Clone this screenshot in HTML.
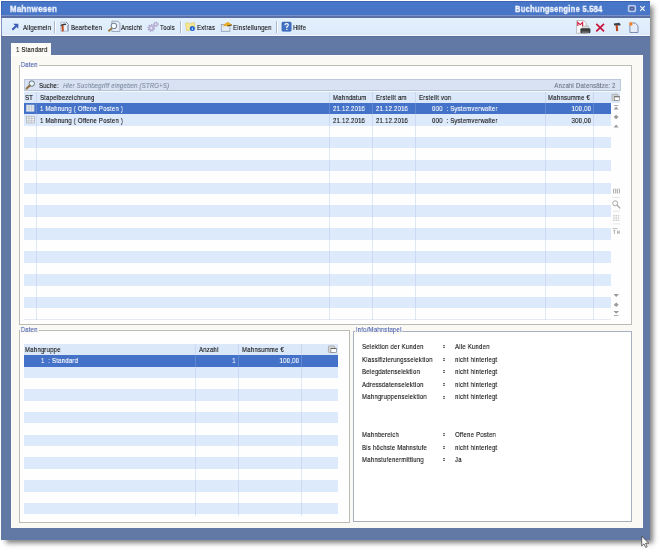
<!DOCTYPE html>
<html><head><meta charset="utf-8"><style>
*{margin:0;padding:0;box-sizing:border-box}
html,body{width:660px;height:556px;overflow:hidden;background:#fff}
body{position:relative;font-family:"Liberation Sans",sans-serif;font-size:7px;color:#111}
.a{position:absolute}
.t{position:absolute;white-space:nowrap;line-height:1;transform-origin:0 0;transform:scaleX(.75);letter-spacing:.28px;font-size:8px;-webkit-text-stroke:.14px currentColor;will-change:transform}
.tr{position:absolute;white-space:nowrap;line-height:1;transform-origin:100% 0;transform:scaleX(.75);letter-spacing:.28px;text-align:right;font-size:8px;-webkit-text-stroke:.14px currentColor;will-change:transform}
.ttl{color:#f4f7ff;font-weight:bold;font-size:9px;transform:scaleX(.9);-webkit-text-stroke:.3px currentColor}
.sep{position:absolute;top:21px;width:2px;height:12px;border-left:1px solid #a9b8cc;border-right:1px solid #fff}
.gbt{color:#4b63b0}
.sel{color:#fff}
</style></head><body>
<div class="a" style="left:1px;top:1px;width:649px;height:539px;background:#6279a6;box-shadow:4px 4px 5px -1px rgba(0,0,0,.5)"></div>
<div class="a" style="left:1px;top:1px;width:649px;height:14px;background:#4776c8;border-top:1px solid #3c64b4;border-left:1px solid #3c64b4"></div>
<div class="a" style="left:1px;top:15px;width:649px;height:1px;background:#7a92c6"></div>
<div class="a" style="left:1px;top:16px;width:649px;height:2px;background:#5a70a6"></div>
<div class="a" style="left:1px;top:18px;width:649px;height:17px;background:linear-gradient(#e3f2fd,#dde9fb);border-left:1px solid #8294bc"></div>
<div class="a" style="left:2px;top:35px;width:648px;height:1px;background:#f2f9ff"></div>
<div class="a" style="left:1px;top:36px;width:649px;height:1px;background:#5b6e9c"></div>
<div class="t ttl" style="left:10px;top:4.1px;transform:scale(.88,1.1)">Mahnwesen</div>
<div class="t ttl" style="left:515px;top:4.1px;transform:scale(.845,1.1)">Buchungsengine 5.584</div>
<div class="t" style="left:23px;top:24px;color:#000;-webkit-text-stroke:.1px #000">Allgemein</div>
<div class="t" style="left:71px;top:24px;color:#000;-webkit-text-stroke:.1px #000">Bearbeiten</div>
<div class="t" style="left:121px;top:24px;color:#000;-webkit-text-stroke:.1px #000">Ansicht</div>
<div class="t" style="left:160px;top:24px;color:#000;-webkit-text-stroke:.1px #000">Tools</div>
<div class="t" style="left:197px;top:24px;color:#000;-webkit-text-stroke:.1px #000">Extras</div>
<div class="t" style="left:233px;top:24px;color:#000;-webkit-text-stroke:.1px #000">Einstellungen</div>
<div class="t" style="left:293px;top:24px;color:#000;-webkit-text-stroke:.1px #000">Hilfe</div>
<div class="sep" style="left:54px"></div>
<div class="sep" style="left:180px"></div>
<div class="sep" style="left:276px"></div>
<div class="a" style="left:11px;top:43px;width:40px;height:13px;background:#fcfbf8"></div>
<div class="a" style="left:11px;top:55px;width:632px;height:473px;background:#faf9f4;border-left:1px solid #fff;border-top:1px solid #fff;border-right:1px solid #fdfdfb"></div>
<div class="t" style="left:16px;top:46px;">1 Standard</div>
<div class="a" style="left:19px;top:65px;width:613px;height:260px;border:1px solid #bcbbb6;background:#fefefe"></div>
<div class="t gbt" style="left:20px;top:61px;background:#fbfaf5;padding:0 1px">Daten</div>
<div class="a" style="left:24px;top:79px;width:597px;height:12px;background:#d9e2f2;border:1px solid #bcc8dc;border-bottom-color:#b8c3d6"></div>
<div class="a" style="left:24px;top:91px;width:596px;height:1px;background:#f4f8ff"></div>
<div class="t" style="left:39px;top:82px;">Suche:</div>
<div class="t" style="left:63px;top:82px;font-style:italic;color:#7c8aa0">Hier Suchbegriff eingeben (STRG+S)</div>
<div class="tr" style="right:44px;top:82px;color:#6c7480">Anzahl Datensätze: 2</div>
<div class="a" style="left:24px;top:92px;width:596px;height:10.6px;background:#dbe8fa"></div>
<div class="t" style="left:25px;top:93.6px;">ST</div>
<div class="t" style="left:40px;top:93.6px;">Stapelbezeichnung</div>
<div class="t" style="left:333px;top:93.6px;">Mahndatum</div>
<div class="t" style="left:376px;top:93.6px;">Erstellt am</div>
<div class="t" style="left:419px;top:93.6px;">Erstellt von</div>
<div class="t" style="left:548px;top:93.6px;">Mahnsumme €</div>
<div class="a" style="left:24px;top:102.6px;width:587px;height:11.62px;background:#4472c8"></div>
<div class="a" style="left:24px;top:114.02px;width:587px;height:11.62px;background:#ddeafc"></div>
<div class="a" style="left:24px;top:136.85999999999999px;width:587px;height:11.62px;background:#ddeafc"></div>
<div class="a" style="left:24px;top:159.7px;width:587px;height:11.62px;background:#ddeafc"></div>
<div class="a" style="left:24px;top:182.54px;width:587px;height:11.62px;background:#ddeafc"></div>
<div class="a" style="left:24px;top:205.38px;width:587px;height:11.62px;background:#ddeafc"></div>
<div class="a" style="left:24px;top:228.22px;width:587px;height:11.62px;background:#ddeafc"></div>
<div class="a" style="left:24px;top:251.06px;width:587px;height:11.62px;background:#ddeafc"></div>
<div class="a" style="left:24px;top:273.9px;width:587px;height:11.62px;background:#ddeafc"></div>
<div class="a" style="left:24px;top:296.74px;width:587px;height:11.62px;background:#ddeafc"></div>
<div class="a" style="left:24px;top:319px;width:587px;height:1px;background:#e6eaf2"></div>
<div class="a" style="left:36px;top:92px;width:1px;height:227.5px;background:rgba(160,182,220,.32)"></div>
<div class="a" style="left:329px;top:92px;width:1px;height:227.5px;background:rgba(160,182,220,.32)"></div>
<div class="a" style="left:372px;top:92px;width:1px;height:227.5px;background:rgba(160,182,220,.32)"></div>
<div class="a" style="left:415px;top:92px;width:1px;height:227.5px;background:rgba(160,182,220,.32)"></div>
<div class="a" style="left:545px;top:92px;width:1px;height:227.5px;background:rgba(160,182,220,.32)"></div>
<div class="a" style="left:593px;top:92px;width:1px;height:227.5px;background:rgba(160,182,220,.32)"></div>
<div class="t" style="left:40px;top:105.19999999999999px;color:#fff">1 Mahnung ( Offene Posten )</div>
<div class="t" style="left:333px;top:105.19999999999999px;color:#fff">21.12.2016</div>
<div class="t" style="left:376px;top:105.19999999999999px;color:#fff">21.12.2016</div>
<div class="t" style="left:432px;top:105.19999999999999px;color:#fff">000&nbsp; : Systemverwalter</div>
<div class="tr" style="right:69px;top:105.19999999999999px;color:#fff">100,00</div>
<div class="t" style="left:40px;top:116.61999999999999px;">1 Mahnung ( Offene Posten )</div>
<div class="t" style="left:333px;top:116.61999999999999px;">21.12.2016</div>
<div class="t" style="left:376px;top:116.61999999999999px;">21.12.2016</div>
<div class="t" style="left:432px;top:116.61999999999999px;">000&nbsp; : Systemverwalter</div>
<div class="tr" style="right:69px;top:116.61999999999999px;">300,00</div>
<div class="a" style="left:19px;top:330px;width:331px;height:193px;border:1px solid #bcbbb6;background:#fefefe"></div>
<div class="t gbt" style="left:20px;top:326px;background:#fbfaf5;padding:0 1px">Daten</div>
<div class="a" style="left:24px;top:344px;width:314px;height:11.2px;background:#dbe8fa"></div>
<div class="t" style="left:25px;top:346.2px;">Mahngruppe</div>
<div class="t" style="left:198.5px;top:346.2px;">Anzahl</div>
<div class="t" style="left:241.5px;top:346.2px;">Mahnsumme €</div>
<div class="a" style="left:24px;top:355.2px;width:314px;height:11.549999999999999px;background:#4472c8"></div>
<div class="a" style="left:24px;top:366.55px;width:314px;height:11.549999999999999px;background:#ddeafc"></div>
<div class="a" style="left:24px;top:389.25px;width:314px;height:11.549999999999999px;background:#ddeafc"></div>
<div class="a" style="left:24px;top:411.95px;width:314px;height:11.549999999999999px;background:#ddeafc"></div>
<div class="a" style="left:24px;top:434.65px;width:314px;height:11.549999999999999px;background:#ddeafc"></div>
<div class="a" style="left:24px;top:457.34999999999997px;width:314px;height:11.549999999999999px;background:#ddeafc"></div>
<div class="a" style="left:24px;top:480.04999999999995px;width:314px;height:11.549999999999999px;background:#ddeafc"></div>
<div class="a" style="left:24px;top:502.75px;width:314px;height:11.549999999999999px;background:#ddeafc"></div>
<div class="a" style="left:195px;top:344px;width:1px;height:172px;background:rgba(160,182,220,.32)"></div>
<div class="a" style="left:238px;top:344px;width:1px;height:172px;background:rgba(160,182,220,.32)"></div>
<div class="a" style="left:301px;top:344px;width:1px;height:172px;background:rgba(160,182,220,.32)"></div>
<div class="t" style="left:41px;top:357.0px;color:#fff">1&nbsp; : Standard</div>
<div class="tr" style="right:424px;top:357.0px;color:#fff">1</div>
<div class="tr" style="right:361px;top:357.0px;color:#fff">100,00</div>
<div class="a" style="left:353px;top:330.5px;width:279px;height:191px;border:1px solid #a8b0c0;background:#fff"></div>
<div class="t gbt" style="left:355px;top:325.5px;background:#fbfaf5;padding:0 1px">Info/Mahnstapel</div>
<div class="t" style="left:361.5px;top:343.0px;">Selektion der Kunden</div>
<div class="a" style="left:443px;top:345px;width:2px;height:3px;background:linear-gradient(#707070 34%,#d8d8d8 34%,#d8d8d8 66%,#707070 66%)"></div>
<div class="t" style="left:454.5px;top:343.0px;">Alle Kunden</div>
<div class="t" style="left:361.5px;top:355.6px;">Klassifizierungsselektion</div>
<div class="a" style="left:443px;top:358px;width:2px;height:3px;background:linear-gradient(#707070 34%,#d8d8d8 34%,#d8d8d8 66%,#707070 66%)"></div>
<div class="t" style="left:454.5px;top:355.6px;">nicht hinterlegt</div>
<div class="t" style="left:361.5px;top:368.2px;">Belegdatenselektion</div>
<div class="a" style="left:443px;top:370px;width:2px;height:3px;background:linear-gradient(#707070 34%,#d8d8d8 34%,#d8d8d8 66%,#707070 66%)"></div>
<div class="t" style="left:454.5px;top:368.2px;">nicht hinterlegt</div>
<div class="t" style="left:361.5px;top:380.8px;">Adressdatenselektion</div>
<div class="a" style="left:443px;top:383px;width:2px;height:3px;background:linear-gradient(#707070 34%,#d8d8d8 34%,#d8d8d8 66%,#707070 66%)"></div>
<div class="t" style="left:454.5px;top:380.8px;">nicht hinterlegt</div>
<div class="t" style="left:361.5px;top:393.4px;">Mahngruppenselektion</div>
<div class="a" style="left:443px;top:396px;width:2px;height:3px;background:linear-gradient(#707070 34%,#d8d8d8 34%,#d8d8d8 66%,#707070 66%)"></div>
<div class="t" style="left:454.5px;top:393.4px;">nicht hinterlegt</div>
<div class="t" style="left:361.5px;top:431.0px;">Mahnbereich</div>
<div class="a" style="left:443px;top:433px;width:2px;height:3px;background:linear-gradient(#707070 34%,#d8d8d8 34%,#d8d8d8 66%,#707070 66%)"></div>
<div class="t" style="left:454.5px;top:431.0px;">Offene Posten</div>
<div class="t" style="left:361.5px;top:443.6px;">Bis höchste Mahnstufe</div>
<div class="a" style="left:443px;top:446px;width:2px;height:3px;background:linear-gradient(#707070 34%,#d8d8d8 34%,#d8d8d8 66%,#707070 66%)"></div>
<div class="t" style="left:454.5px;top:443.6px;">nicht hinterlegt</div>
<div class="t" style="left:361.5px;top:456.2px;">Mahnstufenermittlung</div>
<div class="a" style="left:443px;top:458px;width:2px;height:3px;background:linear-gradient(#707070 34%,#d8d8d8 34%,#d8d8d8 66%,#707070 66%)"></div>
<div class="t" style="left:454.5px;top:456.2px;">Ja</div>
<svg class="a" style="left:0;top:0" width="660" height="556" viewBox="0 0 660 556">
<!-- title buttons -->
<rect x="628.3" y="5.4" width="7.3" height="6.3" rx=".8" fill="#9fb4e4" stroke="#c4d2f2" stroke-width="1"/>
<rect x="630" y="7.1" width="3.9" height="3" rx=".8" fill="#7088c8" stroke="#2c3c74" stroke-width=".8"/>
<path d="M640.3,6.2 L644.7,10.8 M644.7,6.2 L640.3,10.8" stroke="#f4f6ff" stroke-width="1.2"/>
<!-- Allgemein arrow -->
<path d="M12.3,29.8 L16.2,25.9" stroke="#3b5db4" stroke-width="2.1"/>
<path d="M13.2,23.7 L18.3,23.7 L18.3,28.8 Z" fill="#3b5db4"/>
<!-- Bearbeiten -->
<path d="M60.8,22.2 H66.2 L68.4,24.4 V31.2 H60.8 Z" fill="#eaf1f9" stroke="#9aa8c0" stroke-width=".7"/>
<path d="M66.2,22.2 L68.4,24.4 M67.9,25 V31" stroke="#6a7a98" stroke-width=".8"/>
<path d="M60.4,25.6 Q61.6,23.6 65.6,23.6 L66.4,24.8 L64,25.2 L61.4,26.2 Z" fill="#3c3c3c"/>
<path d="M62.6,25.6 L62.8,31.4" stroke="#c04a1e" stroke-width="2"/>
<!-- Ansicht -->
<path d="M111.8,21.2 H118 L119.9,23.1 V31.5 H111.8 Z" fill="#e6edf8" stroke="#8898b2" stroke-width=".8"/>
<circle cx="113.9" cy="25.9" r="2.8" fill="#f4fbff" stroke="#6c7890" stroke-width="1"/>
<path d="M111.9,28.1 L108.4,31.2" stroke="#9c7c3c" stroke-width="1.9"/>
<!-- Tools gears -->
<circle cx="151.2" cy="28" r="3.3" fill="none" stroke="#aca6cc" stroke-width="1.2" stroke-dasharray="1.3 1.2"/>
<circle cx="151.2" cy="28" r="2.6" fill="#bdb8d8" stroke="#a49ec6" stroke-width=".6"/>
<circle cx="151.2" cy="28" r="1" fill="#ecebf6"/>
<circle cx="155.8" cy="24.3" r="2.4" fill="none" stroke="#aca6cc" stroke-width="1" stroke-dasharray="1.1 1"/>
<circle cx="155.8" cy="24.3" r="1.9" fill="#bdb8d8" stroke="#a49ec6" stroke-width=".5"/>
<circle cx="155.8" cy="24.3" r=".8" fill="#ecebf6"/>
<!-- Extras folder -->
<path d="M185.4,23.2 L188.5,22.6 L189.5,23.6 L194.5,22.4 L195,29.5 L186.6,30.8 Z" fill="#f4e690" stroke="#dcc868" stroke-width=".6"/>
<circle cx="192.3" cy="28.6" r="2.5" fill="#1c60d2"/>
<path d="M192.3,27.6 V30" stroke="#dff" stroke-width=".9"/>
<!-- Einstellungen -->
<rect x="221.3" y="24.4" width="8.6" height="6.9" fill="#e4ecf8" stroke="#8a9ab2" stroke-width=".8"/>
<path d="M222.8,26.8 Q224.6,22.4 228.4,21.9 L232,24.9 L228.4,26.2 Q225.8,25.4 222.8,26.8 Z" fill="#e6ac2c"/>
<path d="M227.4,26 L232,24.9" stroke="#6a4412" stroke-width="1"/>
<!-- Hilfe -->
<rect x="281.9" y="22.1" width="9.3" height="9.2" rx="1" fill="#4270c2" stroke="#3058a8" stroke-width=".5"/>
<path d="M284.9,25.2 Q285,23.6 286.6,23.6 Q288.3,23.6 288.3,25.1 Q288.3,26.2 286.8,26.8 V28" fill="none" stroke="#fff" stroke-width="1.2"/>
<rect x="286.2" y="28.8" width="1.2" height="1.2" fill="#fff"/>
<!-- print M -->
<path d="M576.6,20.5 H583.6 L586.3,23.2 V33.2 H576.6 Z" fill="#fafafa" stroke="#a8a8a8" stroke-width=".7"/>
<path d="M577.8,26 V22.3 L580.2,24.6 L582.6,22.3 V26" fill="none" stroke="#d42448" stroke-width="1.2"/>
<rect x="582.2" y="26" width="6" height="2.4" fill="#dcdcdc" stroke="#808080" stroke-width=".4"/>
<rect x="580.4" y="28.2" width="10" height="5" rx="1" fill="#3c3c3c"/>
<rect x="581.8" y="31.6" width="7" height="1" fill="#909090"/>
<!-- red X -->
<path d="M596.3,23.8 L604,31.4 M604,23.8 L596.3,31.4" stroke="#c8143c" stroke-width="1.7"/>
<!-- hammer -->
<path d="M613.8,23.4 L619.2,22.8 L620.6,24.2 L620.2,25.6 L614.2,25.4 Z" fill="#3e4248"/>
<path d="M616.6,25.2 L617.2,31.2" stroke="#b8481c" stroke-width="2.1"/>
<!-- note -->
<path d="M629.9,23 H635.2 L638,25.8 V32.5 H629.9 Z" fill="#e4ecf8" stroke="#7484a6" stroke-width=".9"/>
<circle cx="630.9" cy="23.9" r="1.8" fill="#f08028" stroke="#f8c090" stroke-width=".4"/>
<!-- search magnifier -->
<circle cx="31.8" cy="83.6" r="2.7" fill="#e4f8fa" stroke="#5c6474" stroke-width=".9"/>
<path d="M29.8,85.7 L26.6,88.5" stroke="#94744a" stroke-width="2.2" stroke-linecap="round"/>
<!-- row icons -->
<rect x="26.3" y="105" width="7.8" height="6.3" fill="#eaf0f8" stroke="#c8d0dc" stroke-width=".5"/>
<path d="M26.3,107 H34.1 M26.3,109.2 H34.1 M29,105 V111.3 M31.6,105 V111.3" stroke="#a8b0bc" stroke-width=".5"/>
<rect x="26.3" y="116.2" width="8" height="6.8" fill="#f0f2f4" stroke="#a0a4ac" stroke-width=".6"/>
<path d="M26.3,118.5 H34.3 M26.3,120.8 H34.3 M29,116.2 V123 M31.6,116.2 V123" stroke="#a8acb4" stroke-width=".5"/>
<!-- column chooser top -->
<rect x="612" y="94.3" width="6" height="6.2" rx="1" fill="#d4d4d4" stroke="#9c9c9c" stroke-width=".7"/>
<rect x="614.3" y="96.6" width="5.2" height="3.8" fill="#fcfcfc" stroke="#767676" stroke-width=".6"/>
<rect x="614.3" y="96.3" width="5.2" height="1" fill="#6a6a6a"/>
<!-- column chooser bottom -->
<rect x="328.4" y="345.9" width="6.2" height="6.6" rx="1" fill="#d4d4d4" stroke="#9c9c9c" stroke-width=".7"/>
<rect x="330.9" y="348.3" width="5.4" height="4" fill="#fcfcfc" stroke="#767676" stroke-width=".6"/>
<rect x="330.9" y="348" width="5.4" height="1" fill="#6a6a6a"/>
<!-- side buttons -->
<g fill="#9a9a9a" stroke="none">
<rect x="614" y="105.2" width="4.2" height=".8"/>
<path d="M613.6,109.6 H618.6 L616.1,106.6 Z"/>
<path d="M616.1,114.7 L618.5,117 L616.1,119.3 L613.7,117 Z"/>
<path d="M613.6,127.4 H618.6 L616.1,124.5 Z"/>
<path d="M613.5,294 H619 L616.2,296.9 Z"/>
<path d="M616.2,302.5 L618.6,304.8 L616.2,307.1 L613.8,304.8 Z"/>
<path d="M613.5,311 H619 L616.2,313.8 Z"/>
<rect x="614" y="315.2" width="4.4" height=".8"/>
</g>
<g fill="none" stroke="#989898" stroke-width=".85">
<path d="M613.9,188.6 Q612.9,191.1 613.9,193.6 M619.1,188.6 Q620.1,191.1 619.1,193.6 M615.7,188.8 V193.4 M617.3,188.8 V193.4"/>
<circle cx="615.2" cy="203.3" r="2.5"/>
<path d="M617,205.2 L620.2,208.4" stroke-width="1.1"/>
<path d="M613.2,215.8 H619.8 M613.2,218 H619.8 M613.2,220.2 H619.8" stroke-width=".7" stroke-dasharray="1.5 .8"/>
<path d="M612.8,228.6 H617.4 M614.4,230.4 V234 M613.4,230.6 H615.4 M617.6,230.6 V234 M619.2,230.6 V234 M617.6,232.2 H619.2" stroke-width=".7"/>
</g>
<g stroke="#d4d4d4" stroke-width=".6">
<path d="M612.6,197.6 H620 M612.6,211.2 H620 M612.6,223.9 H620"/>
</g>
<!-- cursor -->
<path d="M641.7,536.2 L641.7,546 L644,543.8 L645.7,547.5 L647.2,546.8 L645.6,543.2 L648.8,543.2 Z" fill="#fafafa" stroke="#2a2a2a" stroke-width=".65"/>
</svg>
</body></html>
